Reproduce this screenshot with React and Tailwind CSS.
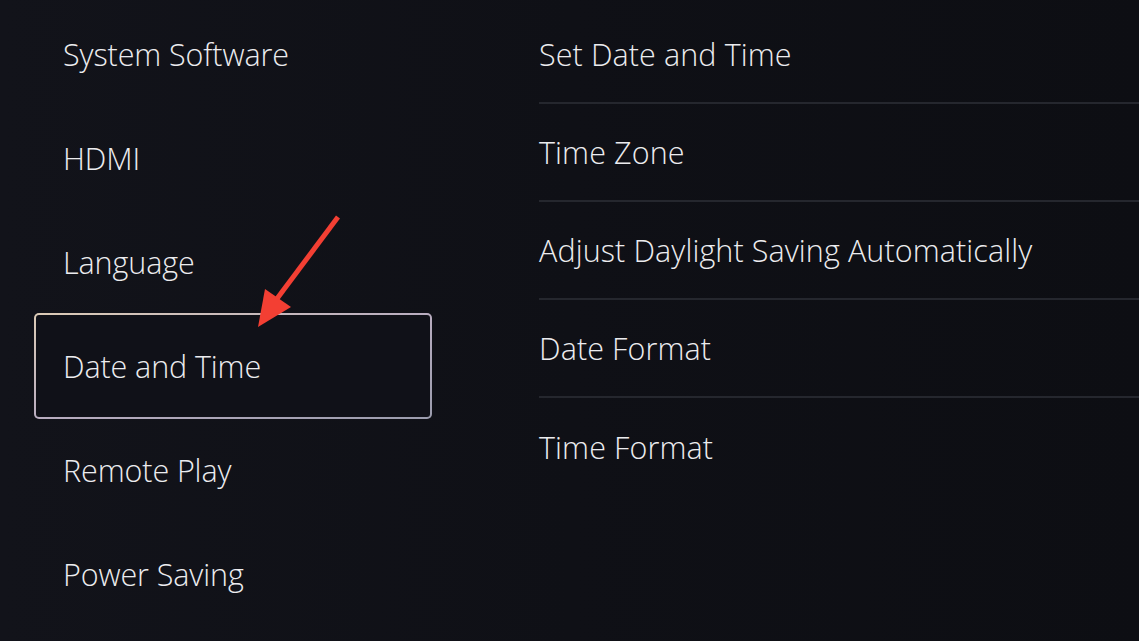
import React from "react";

const left = ["System Software", "HDMI", "Language", "Date and Time", "Remote Play", "Power Saving"];
const right = ["Set Date and Time", "Time Zone", "Adjust Daylight Saving Automatically", "Date Format", "Time Format"];

export default function App() {
  return (
    <div
      className="relative w-[1139px] h-[641px] overflow-hidden bg-linear-to-r from-[#12131a] via-[#0f1016] to-[#0d0e13] text-[#ececef] flex"
      style={{ fontFamily: '"Open Sans", "Noto Sans", sans-serif' }}
    >
      <div className="w-[539px] shrink-0 pl-[34px] pt-[2px] flex flex-col">
        {left.map((t) =>
          t === "Date and Time" ? (
            <div
              key={t}
              className="w-[398px] h-[106px] -my-px rounded-[5px] p-[2px] bg-linear-to-br from-[#dccbb6] via-[#b9adc0] to-[#9b9cad]"
            >
              <div className="w-full h-full rounded-[3px] bg-[#101118] flex items-center pl-[27px] pt-[2px] text-[30.5px] font-light tracking-[-0.1px]">
                {t}
              </div>
            </div>
          ) : (
            <div key={t} className="h-[104px] flex items-center pl-[29px] pt-[2px] text-[30.5px] font-light tracking-[-0.1px]">
              {t}
            </div>
          )
        )}
      </div>
      <div className="flex-1 pt-[6px] flex flex-col">
        {right.map((t, i) => (
          <div
            key={t}
            className={
              "h-[98px] flex items-center pt-[2px] text-[30.5px] font-light tracking-[0.1px] " +
              (i < right.length - 1 ? "border-b-2 border-[#25272e]" : "")
            }
          >
            {t}
          </div>
        ))}
      </div>
      <svg className="absolute left-0 top-0 pointer-events-none" width="1139" height="641">
        <line x1="338" y1="217" x2="276" y2="300" stroke="#f33f33" strokeWidth="5" strokeLinecap="butt" />
        <polygon points="258,327 265,289 291,307" fill="#f33f33" />
      </svg>
    </div>
  );
}
